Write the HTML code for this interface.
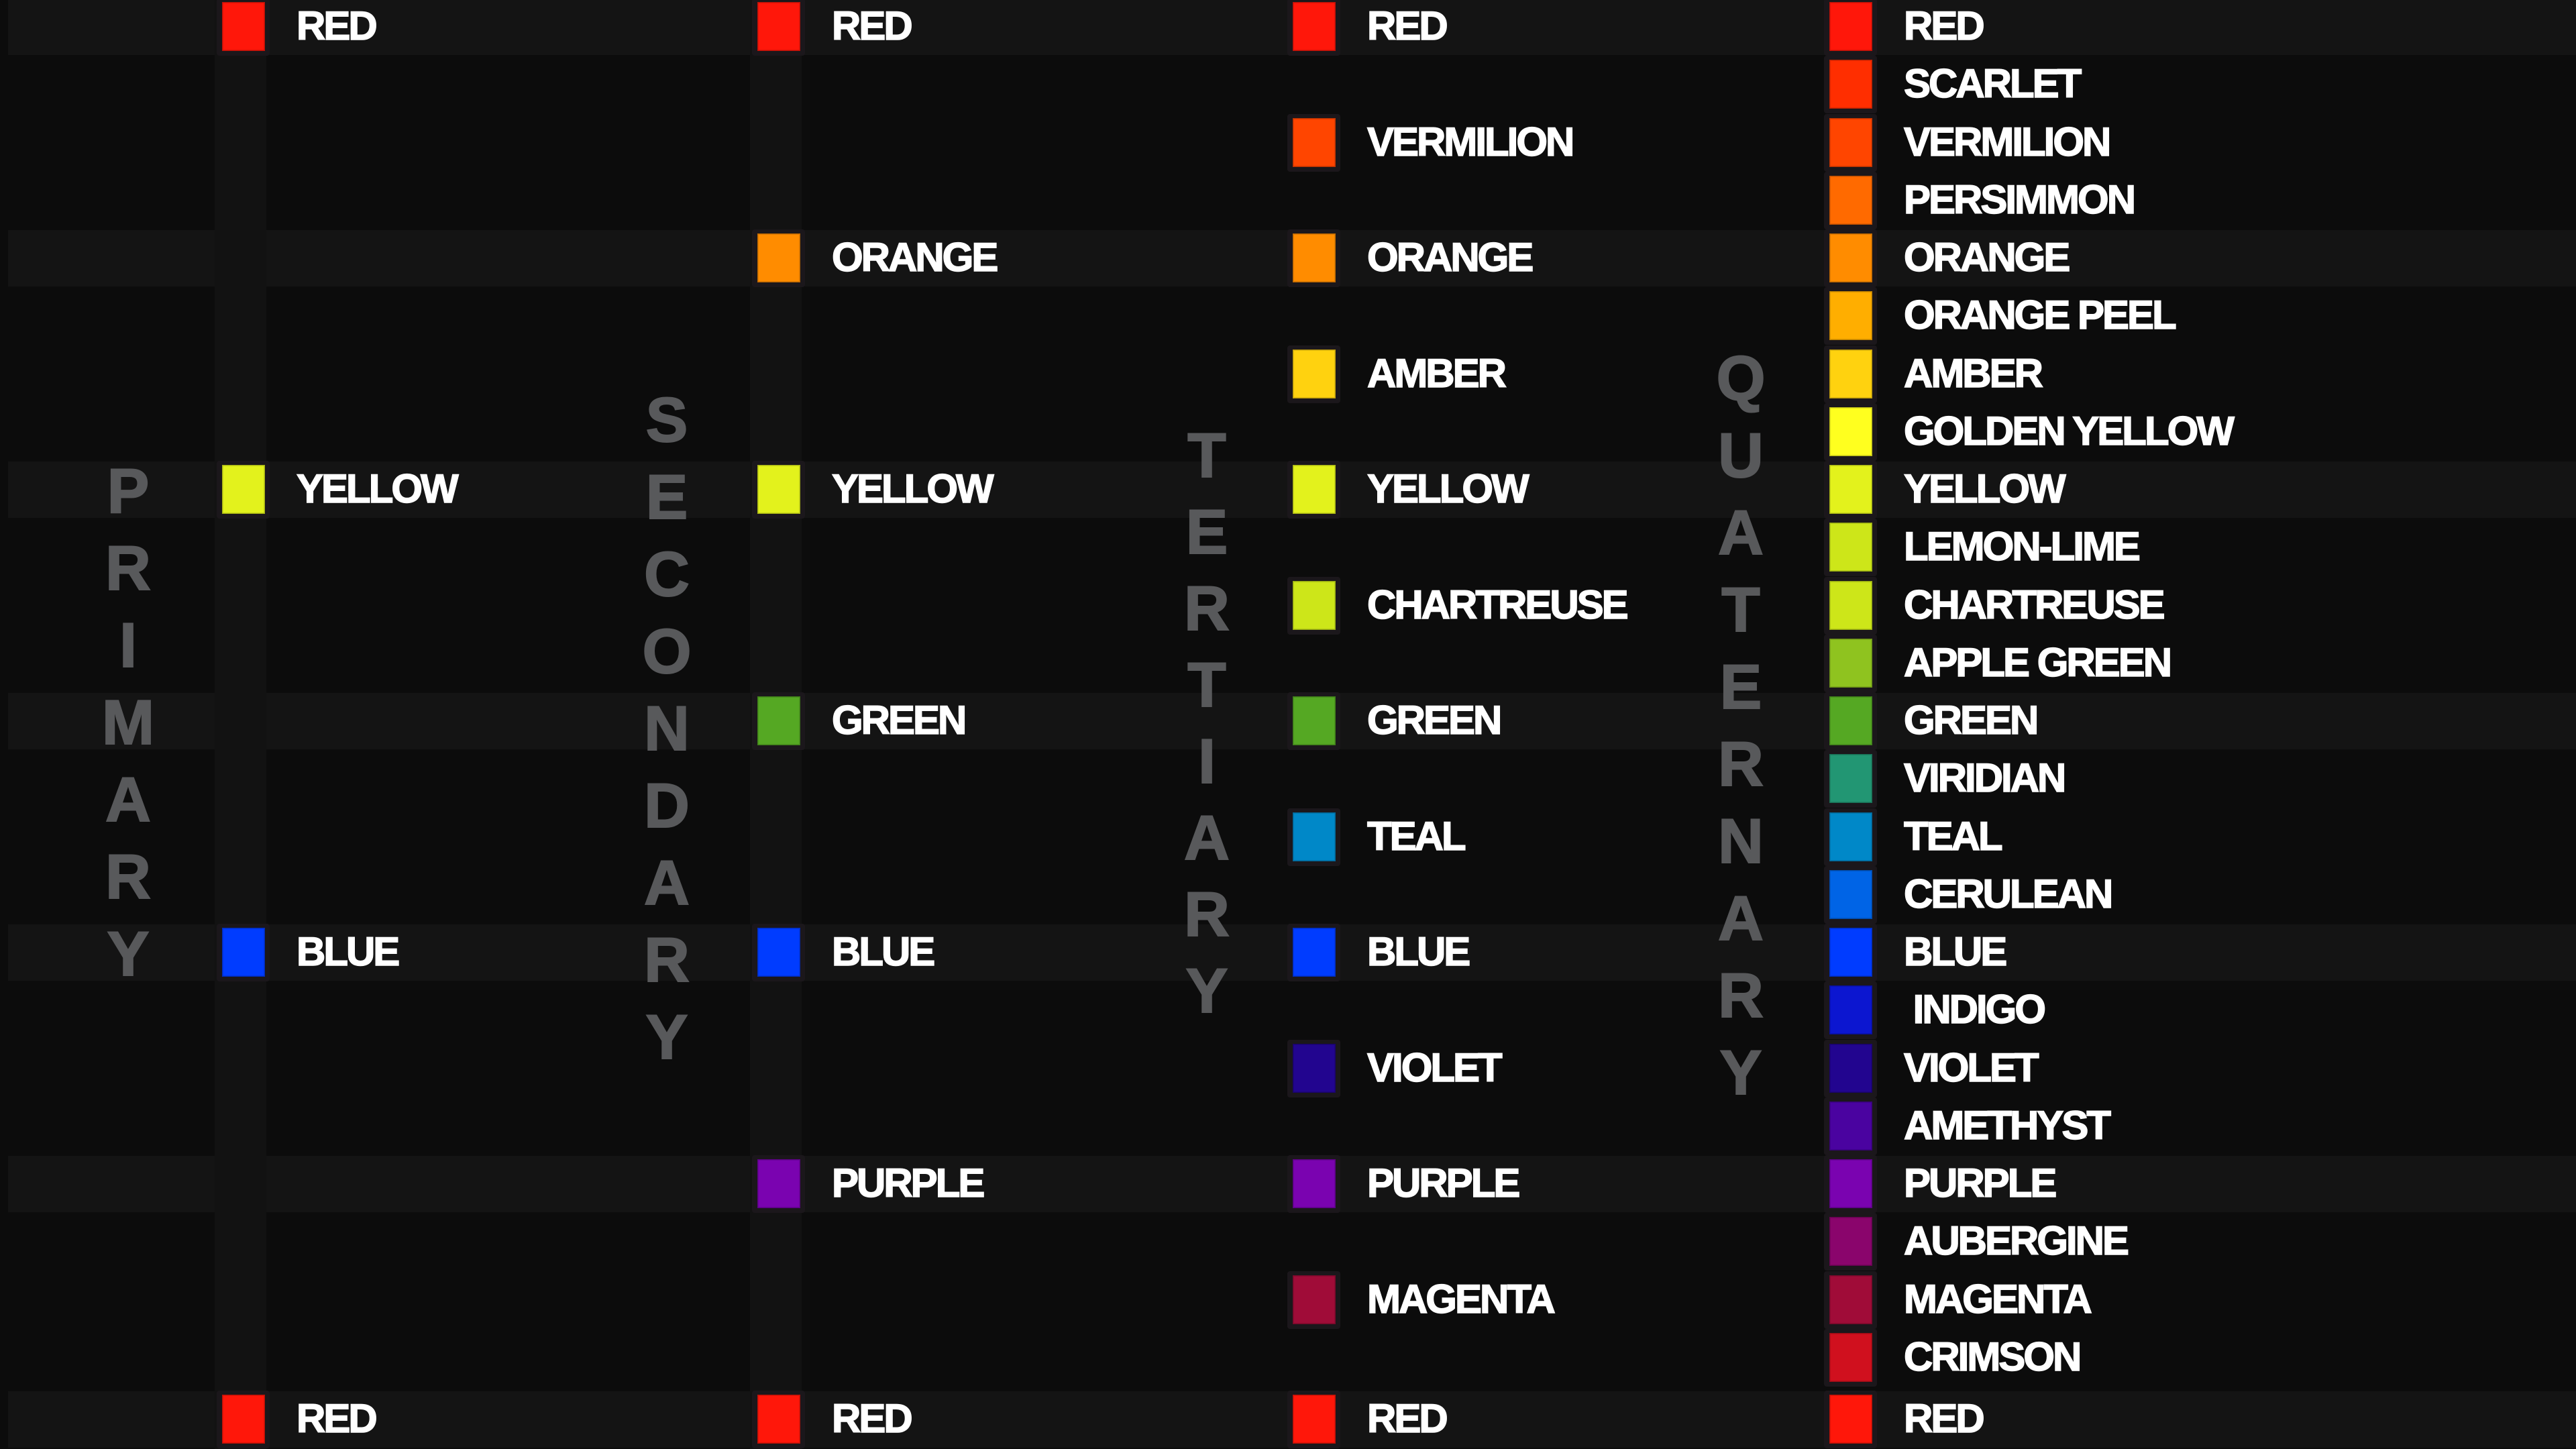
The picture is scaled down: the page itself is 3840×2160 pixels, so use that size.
<!DOCTYPE html>
<html><head><meta charset="utf-8"><style>
*{margin:0;padding:0;box-sizing:border-box}
html,body{width:3840px;height:2160px;overflow:hidden;background:#0c0c0c}
body{position:relative;font-family:"Liberation Sans",sans-serif}
.band{position:absolute;left:12px;right:0;height:84px;background:#141414;top:calc(-2px + 86.25px*var(--k))}
.strip{position:absolute;top:0;height:2160px;width:77px;background:#121212}
.r{position:absolute;height:86px;width:79px;top:calc(-3px + 86.25px*var(--k))}
.r i{position:absolute;left:0;top:0;width:79px;height:86px;background:#1b171b;border-radius:4px}
.r i::after{content:"";position:absolute;left:8px;top:6px;width:64px;height:73px;background:var(--c);box-shadow:inset 0 0 0 1.5px rgba(0,0,0,.25)}
.r b{position:absolute;left:119px;top:0px;line-height:84px;font-size:60px;font-weight:700;color:#fff;letter-spacing:-3px;white-space:nowrap;-webkit-text-stroke:1.5px #fff}
.L{position:absolute;width:140px;text-align:center;font-size:94px;line-height:100px;font-weight:700;color:#58595b;-webkit-text-stroke:2px #58595b}
.last{top:2073px!important}
.bl{top:2074px!important}
</style></head><body>
<div class="band" style="--k:0"></div><div class="band" style="--k:4"></div><div class="band" style="--k:8"></div><div class="band" style="--k:12"></div><div class="band" style="--k:16"></div><div class="band" style="--k:20"></div><div class="band bl" style="--k:24"></div>
<div class="strip" style="left:320px"></div>
<div class="strip" style="left:1118px"></div>

<div class="L" style="left:121px;top:682px">P</div>
<div class="L" style="left:121px;top:797px">R</div>
<div class="L" style="left:121px;top:912px">I</div>
<div class="L" style="left:121px;top:1027px">M</div>
<div class="L" style="left:121px;top:1142px">A</div>
<div class="L" style="left:121px;top:1257px">R</div>
<div class="L" style="left:121px;top:1372px">Y</div>

<div class="L" style="left:924px;top:576px">S</div>
<div class="L" style="left:924px;top:691px">E</div>
<div class="L" style="left:924px;top:806px">C</div>
<div class="L" style="left:924px;top:921px">O</div>
<div class="L" style="left:924px;top:1036px">N</div>
<div class="L" style="left:924px;top:1151px">D</div>
<div class="L" style="left:924px;top:1266px">A</div>
<div class="L" style="left:924px;top:1381px">R</div>
<div class="L" style="left:924px;top:1496px">Y</div>

<div class="L" style="left:1729px;top:629px">T</div>
<div class="L" style="left:1729px;top:743px">E</div>
<div class="L" style="left:1729px;top:857px">R</div>
<div class="L" style="left:1729px;top:971px">T</div>
<div class="L" style="left:1729px;top:1085px">I</div>
<div class="L" style="left:1729px;top:1199px">A</div>
<div class="L" style="left:1729px;top:1313px">R</div>
<div class="L" style="left:1729px;top:1427px">Y</div>

<div class="L" style="left:2525px;top:514px">Q</div>
<div class="L" style="left:2525px;top:629px">U</div>
<div class="L" style="left:2525px;top:744px">A</div>
<div class="L" style="left:2525px;top:859px">T</div>
<div class="L" style="left:2525px;top:974px">E</div>
<div class="L" style="left:2525px;top:1089px">R</div>
<div class="L" style="left:2525px;top:1204px">N</div>
<div class="L" style="left:2525px;top:1319px">A</div>
<div class="L" style="left:2525px;top:1434px">R</div>
<div class="L" style="left:2525px;top:1549px">Y</div>

<div class="r" style="left:323px;--k:0;--c:#ff170a"><i></i><b>RED</b></div>
<div class="r" style="left:323px;--k:8;--c:#e3f21c"><i></i><b>YELLOW</b></div>
<div class="r" style="left:323px;--k:16;--c:#003cff"><i></i><b>BLUE</b></div>
<div class="r last" style="left:323px;--k:24;--c:#ff170a"><i></i><b>RED</b></div>

<div class="r" style="left:1121px;--k:0;--c:#ff170a"><i></i><b>RED</b></div>
<div class="r" style="left:1121px;--k:4;--c:#ff8c00"><i></i><b>ORANGE</b></div>
<div class="r" style="left:1121px;--k:8;--c:#e3f21c"><i></i><b>YELLOW</b></div>
<div class="r" style="left:1121px;--k:12;--c:#55a823"><i></i><b>GREEN</b></div>
<div class="r" style="left:1121px;--k:16;--c:#003cff"><i></i><b>BLUE</b></div>
<div class="r" style="left:1121px;--k:20;--c:#7a03b0"><i></i><b>PURPLE</b></div>
<div class="r last" style="left:1121px;--k:24;--c:#ff170a"><i></i><b>RED</b></div>

<div class="r" style="left:1919px;--k:0;--c:#ff170a"><i></i><b>RED</b></div>
<div class="r" style="left:1919px;--k:2;--c:#ff4500"><i></i><b>VERMILION</b></div>
<div class="r" style="left:1919px;--k:4;--c:#ff8c00"><i></i><b>ORANGE</b></div>
<div class="r" style="left:1919px;--k:6;--c:#ffd20f"><i></i><b>AMBER</b></div>
<div class="r" style="left:1919px;--k:8;--c:#e3f21c"><i></i><b>YELLOW</b></div>
<div class="r" style="left:1919px;--k:10;--c:#cde619"><i></i><b>CHARTREUSE</b></div>
<div class="r" style="left:1919px;--k:12;--c:#55a823"><i></i><b>GREEN</b></div>
<div class="r" style="left:1919px;--k:14;--c:#0088c8"><i></i><b>TEAL</b></div>
<div class="r" style="left:1919px;--k:16;--c:#003cff"><i></i><b>BLUE</b></div>
<div class="r" style="left:1919px;--k:18;--c:#22058f"><i></i><b>VIOLET</b></div>
<div class="r" style="left:1919px;--k:20;--c:#7a03b0"><i></i><b>PURPLE</b></div>
<div class="r" style="left:1919px;--k:22;--c:#a00c38"><i></i><b>MAGENTA</b></div>
<div class="r last" style="left:1919px;--k:24;--c:#ff170a"><i></i><b>RED</b></div>

<div class="r" style="left:2719px;--k:0;--c:#ff170a"><i></i><b>RED</b></div>
<div class="r" style="left:2719px;--k:1;--c:#ff2e00"><i></i><b>SCARLET</b></div>
<div class="r" style="left:2719px;--k:2;--c:#ff4500"><i></i><b>VERMILION</b></div>
<div class="r" style="left:2719px;--k:3;--c:#ff6a00"><i></i><b>PERSIMMON</b></div>
<div class="r" style="left:2719px;--k:4;--c:#ff8c00"><i></i><b>ORANGE</b></div>
<div class="r" style="left:2719px;--k:5;--c:#ffae00"><i></i><b>ORANGE PEEL</b></div>
<div class="r" style="left:2719px;--k:6;--c:#ffd20f"><i></i><b>AMBER</b></div>
<div class="r" style="left:2719px;--k:7;--c:#ffff1f"><i></i><b>GOLDEN YELLOW</b></div>
<div class="r" style="left:2719px;--k:8;--c:#e3f21c"><i></i><b>YELLOW</b></div>
<div class="r" style="left:2719px;--k:9;--c:#cde619"><i></i><b>LEMON-LIME</b></div>
<div class="r" style="left:2719px;--k:10;--c:#cde619"><i></i><b>CHARTREUSE</b></div>
<div class="r" style="left:2719px;--k:11;--c:#8fc31f"><i></i><b>APPLE GREEN</b></div>
<div class="r" style="left:2719px;--k:12;--c:#55a823"><i></i><b>GREEN</b></div>
<div class="r" style="left:2719px;--k:13;--c:#229673"><i></i><b>VIRIDIAN</b></div>
<div class="r" style="left:2719px;--k:14;--c:#0088c8"><i></i><b>TEAL</b></div>
<div class="r" style="left:2719px;--k:15;--c:#0064e6"><i></i><b>CERULEAN</b></div>
<div class="r" style="left:2719px;--k:16;--c:#003cff"><i></i><b>BLUE</b></div>
<div class="r" style="left:2719px;--k:17;--c:#0c16d0"><i></i><b>&nbsp;INDIGO</b></div>
<div class="r" style="left:2719px;--k:18;--c:#22058f"><i></i><b>VIOLET</b></div>
<div class="r" style="left:2719px;--k:19;--c:#4a03a0"><i></i><b>AMETHYST</b></div>
<div class="r" style="left:2719px;--k:20;--c:#7a03b0"><i></i><b>PURPLE</b></div>
<div class="r" style="left:2719px;--k:21;--c:#8a056c"><i></i><b>AUBERGINE</b></div>
<div class="r" style="left:2719px;--k:22;--c:#a00c38"><i></i><b>MAGENTA</b></div>
<div class="r" style="left:2719px;--k:23;--c:#d0101e"><i></i><b>CRIMSON</b></div>
<div class="r last" style="left:2719px;--k:24;--c:#ff170a"><i></i><b>RED</b></div>
</body></html>
